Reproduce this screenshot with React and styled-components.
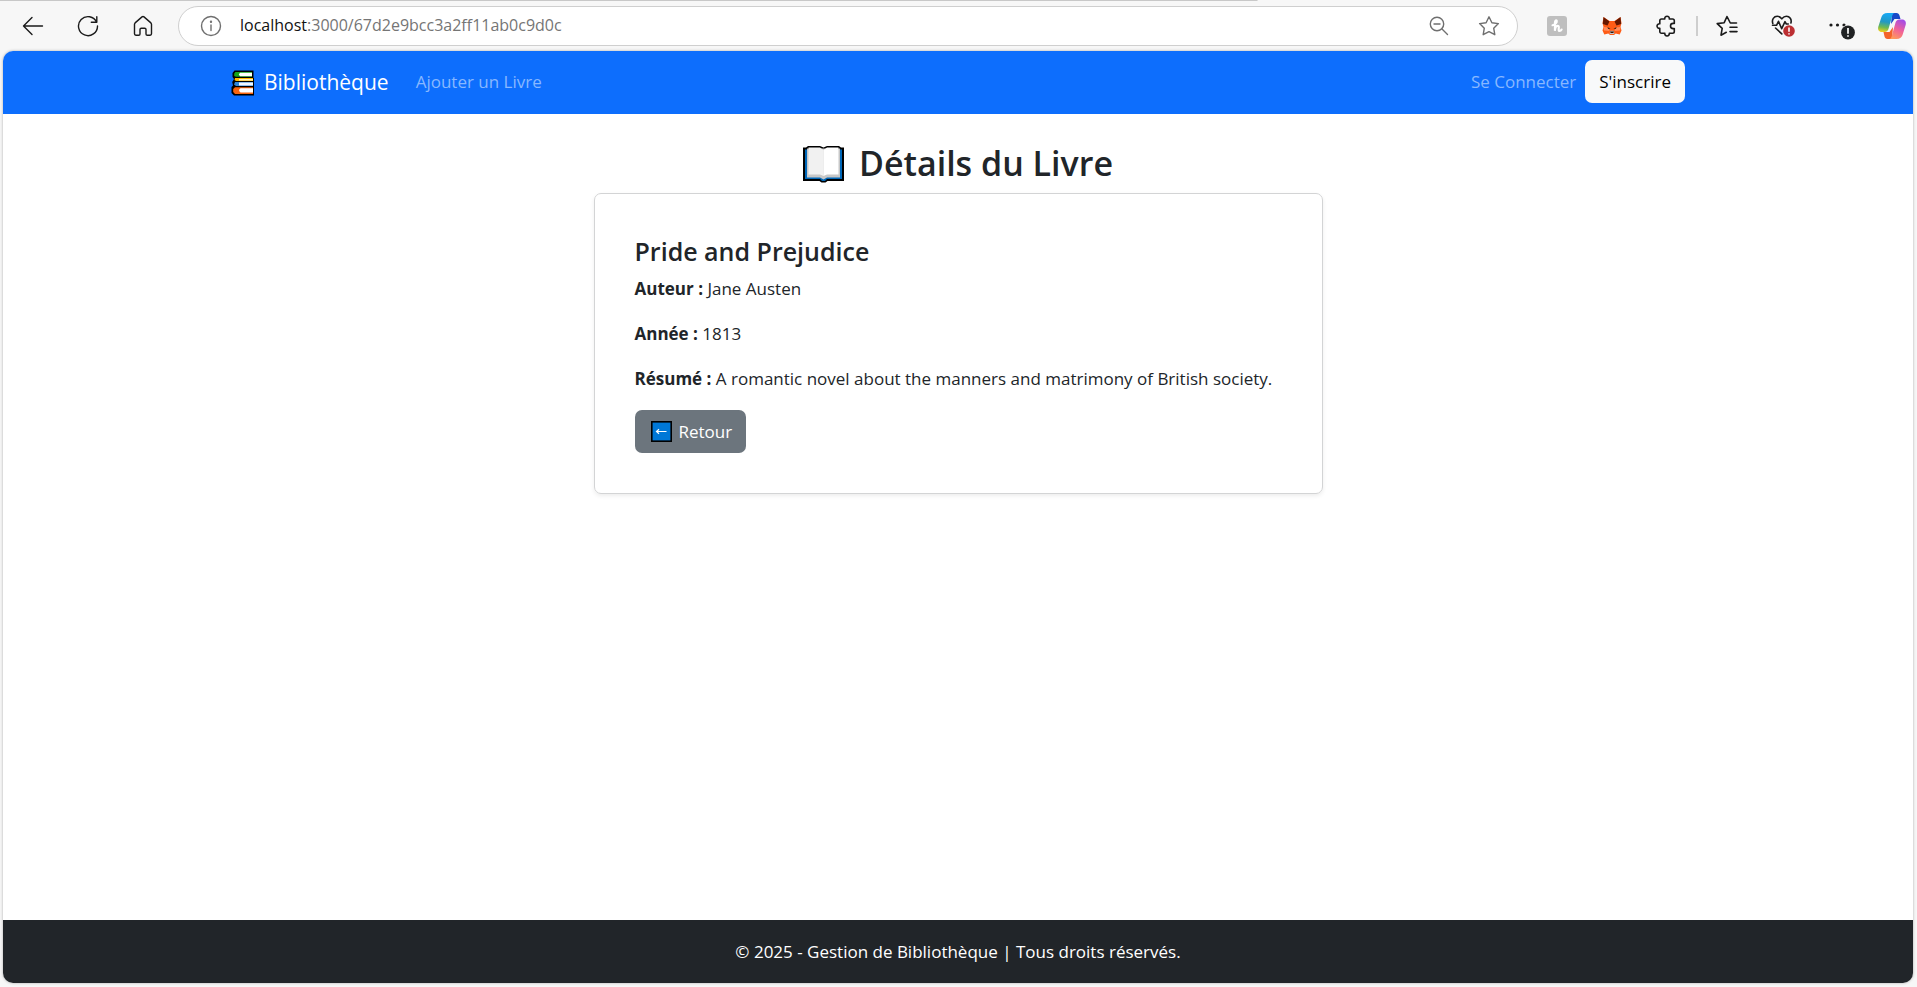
import React from "react";
import styled, { createGlobalStyle } from "styled-components";

const GlobalStyle = createGlobalStyle`
  *, *::before, *::after { box-sizing: border-box; }
  html, body { margin: 0; padding: 0; }
  body {
    background: #f7f7f7;
    color: #212529;
    font-family: "Segoe UI", "Open Sans", "Noto Sans", sans-serif;
    font-size: 17px;
    line-height: 27px;
  }
  button, input { font: inherit; }
`;

const Window = styled.div`
  display: flex;
  flex-direction: column;
  min-height: 100vh;
`;

/* Browser toolbar */

const Toolbar = styled.header`
  display: flex;
  align-items: center;
  height: 51px;
  padding: 0 0 8px 5px;
  background: linear-gradient(#c8c8c8, #c8c8c8) 0 0 / 65.6% 1px no-repeat #f7f7f7;
`;

const ToolButton = styled.button`
  display: flex;
  flex: none;
  align-items: center;
  justify-content: center;
  width: ${(p) => p.$width || 55}px;
  height: 32px;
  margin-top: 8px;
  padding: 0;
  border: 0;
  background: none;
  color: ${(p) => p.$color || "#1b1b1b"};
`;

const AddressBar = styled.label`
  display: flex;
  flex: 1;
  align-items: center;
  height: 40px;
  margin: 8px 11px 0 8px;
  padding: 0 3px 0 7px;
  border: 1px solid #cfcfcf;
  border-radius: 20px;
  background: #fff;
  font-size: 16px;

  ${ToolButton} { margin-top: 0; }
`;

const Host = styled.span`
  margin-left: 4px;
  color: #111;
`;

const UrlInput = styled.input`
  flex: 1;
  min-width: 0;
  padding: 0;
  border: 0;
  outline: 0;
  background: none;
  color: #757575;
`;

const Divider = styled.span`
  width: 2px;
  height: 20px;
  margin: 8px 2px 0;
  background: #cecece;
`;

/* Page */

const Page = styled.div`
  display: flex;
  flex: 1;
  flex-direction: column;
  margin: 0 4px 4px 3px;
  overflow: hidden;
  border-radius: 10px;
  background: #fff;
  box-shadow: 0 0 3px rgba(0, 0, 0, 0.3);
`;

const Navbar = styled.nav`
  padding: 9px 0 11px;
  background: #0d6efd;
`;

const Container = styled.div`
  display: flex;
  align-items: center;
  width: 100%;
  max-width: 1454px;
  margin: 0 auto;
`;

const Brand = styled.a`
  display: flex;
  align-items: center;
  gap: 9px;
  margin-right: 27px;
  padding-top: 2px;
  color: #fff;
  font-size: 21px;
  text-decoration: none;
`;

const NavLink = styled.a`
  color: #88b8ff;
  text-decoration: none;
`;

const NavActions = styled.div`
  display: flex;
  align-items: center;
  gap: 9px;
  margin-left: auto;
`;

const Button = styled.button`
  display: inline-flex;
  align-items: center;
  gap: 6px;
  height: 43px;
  padding: 0 14px;
  border: 0;
  border-radius: 7px;
  background: ${(p) => (p.$light ? "#f8f9fa" : "#6c757d")};
  color: ${(p) => (p.$light ? "#000" : "#fff")};
`;

const Main = styled.main`
  display: flex;
  flex: 1;
  flex-direction: column;
  align-items: center;
  padding: 28px 14px;
`;

const Heading = styled.h2`
  display: flex;
  align-items: center;
  gap: 15px;
  margin: 0 0 8px;
  font-size: 34px;
  font-weight: 600;
  line-height: 43px;
`;

const Card = styled.article`
  width: 100%;
  max-width: 729px;
  padding: 40px;
  border: 1px solid #d3d4d5;
  border-radius: 7px;
  box-shadow: 0 2px 4px rgba(0, 0, 0, 0.075);
`;

const CardTitle = styled.h4`
  margin: 0 0 6px;
  font-size: 25px;
  font-weight: 600;
  line-height: 35px;
`;

const Field = styled.p`
  margin: 0 0 18px;
`;

const Footer = styled.footer`
  padding: 18px;
  background: #212529;
  color: #fff;
  text-align: center;
`;

/* Icons */

const Stroke = ({ size = 22, width = 1.4, children }) => (
  <svg width={size} height={size} viewBox="0 0 22 22" fill="none" stroke="currentColor"
    strokeWidth={width} strokeLinecap="round" strokeLinejoin="round" aria-hidden="true">
    {children}
  </svg>
);

const BackIcon = () => (
  <Stroke><path d="M20.500 11H1.500M10 2.500 1.500 11l8.500 8.500" /></Stroke>
);
const ReloadIcon = () => (
  <Stroke><path d="M19.700 7.300A9.500 9.500 0 1 0 20.500 11M19.800 1.800v5.500h-5.500" /></Stroke>
);
const HomeIcon = () => (
  <Stroke>
    <path d="M2.500 9.300c0-.6.200-1 .6-1.400L10 1.900c.6-.5 1.400-.5 2 0l6.900 6c.4.4.6.8.6 1.400V18.800c0 .9-.5 1.400-1.400 1.400h-2.800c-.8 0-1.300-.5-1.300-1.300v-4.400c0-.8-.5-1.300-1.300-1.300H9.300c-.8 0-1.300.5-1.300 1.300v4.400c0 .8-.5 1.300-1.300 1.300H3.900c-.9 0-1.400-.5-1.400-1.400z" />
  </Stroke>
);
const InfoIcon = () => (
  <Stroke><circle cx="11" cy="11" r="9.500" /><path d="M11 10v5.500" /><circle cx="11" cy="6.800" r=".5" fill="currentColor" /></Stroke>
);
const ZoomOutIcon = () => (
  <Stroke><circle cx="9" cy="9" r="6.700" /><path d="M6 9h6M14 14l5.500 5.500" /></Stroke>
);
const StarIcon = () => (
  <Stroke><path d="m11 1.800 2.900 5.900 6.500.9-4.700 4.600 1.100 6.500-5.800-3.100-5.800 3.100 1.100-6.500-4.700-4.600 6.500-.9z" /></Stroke>
);
const PuzzleIcon = () => (
  <Stroke width={1.600}>
    <path d="M5.500 4h3.300a2.300 2.300 0 1 1 4.500 0h3.300c1 0 1.700.7 1.700 1.700v2.700h-1.200a2.600 2.600 0 1 0 0 5.200h1.200v2.900c0 1-.7 1.700-1.700 1.700h-3.300a2.300 2.300 0 1 1-4.500 0H5.500c-1 0-1.700-.7-1.700-1.700v-3.200a2.300 2.300 0 1 1 0-4.500V5.700C3.800 4.700 4.500 4 5.500 4z" />
  </Stroke>
);
const FavoritesIcon = () => (
  <Stroke width={1.600}>
    <path d="M20.500 8h-6.200L11 1.500 8.200 7.700l-7 .9 5 4.700-1.200 6.900 5.300-2.900M14 12.300h7M14 16.600h7" />
  </Stroke>
);
const HeartIcon = () => (
  <svg width="26" height="24" viewBox="0 0 26 24" fill="none" aria-hidden="true">
    <g stroke="#1b1b1b" strokeWidth="1.600" strokeLinecap="round" strokeLinejoin="round">
      <path d="M2.800 9.500C1.500 5.500 4 2.300 7.200 2.300c2 0 3.300 1 4.600 2.500 1.300-1.500 2.600-2.500 4.600-2.500 3.200 0 5.600 3 4.500 6.700M5.500 14l6.300 5.900" />
      <path d="M2.500 11.300h4l2-4 3.200 7.400 3.300-7 1.300 2.300h2" />
    </g>
    <circle cx="19" cy="17" r="5.800" fill="#bc2f32" />
    <path d="M19 13.500v4.300M19 19.300v1.200" stroke="#fff" strokeWidth="1.600" />
  </svg>
);
const MoreIcon = () => (
  <svg width="32" height="28" viewBox="0 0 32 28" aria-hidden="true">
    <g fill="#1b1b1b">
      <circle cx="8" cy="13" r="1.600" /><circle cx="14.500" cy="13" r="1.600" /><circle cx="21" cy="13" r="1.600" />
    </g>
    <circle cx="25" cy="20.500" r="7.600" fill="#f7f7f7" />
    <circle cx="25" cy="20.500" r="6.900" fill="#202224" />
    <path d="M25 16v5.700M25 23.200v1.500" stroke="#fff" strokeWidth="1.700" />
  </svg>
);
const HoneyIcon = () => (
  <svg width="20" height="20" viewBox="0 0 20 20" aria-hidden="true">
    <rect width="20" height="20" rx="3" fill="#bfbfbf" />
    <path d="M5.500 9.300c2.500-.5 4.500-2.600 4.300-4.200-.2-1.500-1.900-1-1.900 1.500v8.200c.3-3 1.500-5 3-5 2.200 0-.4 5.200 1.500 5.200 1.100 0 1.800-.6 2.200-1.500" fill="none" stroke="#fff" strokeWidth="2.100" strokeLinecap="round" />
  </svg>
);
const FoxIcon = () => (
  <svg width="20" height="20" viewBox="0 0 20 20" aria-hidden="true">
    <path d="M1.500 1 7.500 5h5L18.500 1 19.500 7l-1 4 1 3.500-1.800 4-4-1L12 19H8l-1.700-1.500-4 1-1.800-4 1-3.500-1-4z" fill="#ff5c16" />
    <path d="M1.500 1 7.500 5.500 5.500 9.500.8 8zM18.500 1l-6 4.500 2 4L19.200 8z" fill="#661800" />
    <path d="m1.500 11 5 .5 1 3.500-5.500-.5zM18.500 11l-5 .5-1 3.500 5.500-.5z" fill="#ff8d5d" />
    <path d="m5.500 11 3 2-2.500-.2zM14.500 11l-3 2 2.500-.2z" fill="#1c1410" />
    <path d="m8 15.500.5-.8h3l.5.8.3 2.500H7.700z" fill="#c0c4cd" />
    <path d="M8 15.500h4l-.7 1.500H8.700z" fill="#391400" />
  </svg>
);
const CopilotIcon = () => (
  <svg width="30" height="28" viewBox="0 0 30 28" aria-hidden="true">
    <defs>
      <linearGradient id="cpA" x1=".4" y1="0" x2=".25" y2="1">
        <stop offset="0" stopColor="#18a9f5" /><stop offset=".45" stopColor="#2298c4" />
        <stop offset=".75" stopColor="#6fb951" /><stop offset="1" stopColor="#f5cf1b" />
      </linearGradient>
      <linearGradient id="cpB" x1=".75" y1="0" x2=".3" y2="1">
        <stop offset="0" stopColor="#a24be8" /><stop offset=".5" stopColor="#f0609a" /><stop offset="1" stopColor="#ff9a5a" />
      </linearGradient>
    </defs>
    <path d="M15 1h4.500c1.700 0 2.500 1 3 2.500L23.500 7h-6L14 12z" fill="#1749c8" />
    <path d="M15 27h-4.500c-1.700 0-2.500-1-3-2.500L6.500 20h6l3.500-5z" fill="#f4632a" />
    <path d="M10.500 1H18c-1.600 0-2.300 1.300-2.800 3l-3.600 12.500C11 18.800 9.800 20 7.500 20H4.800C2 20 .5 17.500 1.300 14.700l2.900-9C5 2.800 7 1 10.500 1z" fill="url(#cpA)" />
    <path d="M19.500 27H12c1.600 0 2.300-1.300 2.800-3l3.600-13C19 8.700 20.200 7.500 22.500 7.500h2.700c2.800 0 4.300 2.500 3.500 5.300l-2.900 9.500C25 25.200 23 27 19.500 27z" fill="url(#cpB)" />
  </svg>
);

const BooksIcon = () => (
  <svg width="24" height="26" viewBox="0 0 24 26" aria-hidden="true">
    <path d="M3.500.5H22.500V8H23v17.500H3L.5 23v-6L2 15.500 1.200 12 3 9 1.500 7V3z" fill="#000" />
    <path d="M4.300 2H21v4.800H5L3.200 6V3.800z" fill="#16a51a" />
    <path d="M9 2.800h12v3.400H9L7.800 4.500z" fill="#fff" />
    <path d="M4 8h18v3H5L3.500 10z" fill="#ffb900" />
    <path d="M8 9h14v1.600H8z" fill="#fff3c2" />
    <path d="M4 12h18v4H5l-2-1.500z" fill="#2f86d8" />
    <path d="M8 12.600h14v2.900H8z" fill="#f4f8ff" />
    <path d="M4 17.200h18v6.800H4L2.200 22v-3z" fill="#f7630c" />
    <path d="M9.500 18.200H22v4.300H9.500L8.200 21v-1.500z" fill="#fff" />
  </svg>
);
const OpenBookIcon = () => (
  <svg width="41" height="38" viewBox="0 0 41 38" aria-hidden="true">
    <path d="M0 2.500h3l2-1.500h12l3.500 1.500L24 1h12l2 1.500h3V36H24.500l-2 1.500h-4l-2-1.500H0z" fill="#000" />
    <path d="M2 4.500h37V34H24l-2 2h-3l-2-2H2z" fill="#0067b8" />
    <path d="M4 3.500h33v29H24l-3.500 2-3.500-2H4z" fill="#c7c7c7" />
    <path d="M5.500 2.500H17l3.500 2.500v26L17 29.500H5.500z" fill="#f1f1f1" />
    <path d="M35.500 2.500H24L20.500 5v26l3.500-1.500h11.500z" fill="#fff" />
  </svg>
);
const LeftArrowIcon = () => (
  <svg width="24" height="21" viewBox="0 0 24 21" aria-hidden="true">
    <rect x="2.800" y=".8" width="19.400" height="19.400" fill="#0078d7" stroke="#000" strokeWidth="1.600" />
    <path d="M17.500 10.500H7.500M10 8.300 7.500 10.500l2.500 2.200" fill="none" stroke="#fff" strokeWidth="1.200" />
  </svg>
);

export default function App() {
  return (
    <Window>
      <GlobalStyle />
      <Toolbar>
        <ToolButton aria-label="Précédent"><BackIcon /></ToolButton>
        <ToolButton aria-label="Actualiser"><ReloadIcon /></ToolButton>
        <ToolButton aria-label="Accueil"><HomeIcon /></ToolButton>
        <AddressBar htmlFor="url">
          <ToolButton type="button" $width={50} $color="#6f6f6f" aria-label="Informations"><InfoIcon /></ToolButton>
          <Host>localhost</Host>
          <UrlInput id="url" type="text" defaultValue=":3000/67d2e9bcc3a2ff11ab0c9d0c" />
          <ToolButton type="button" $width={50} $color="#6f6f6f" aria-label="Zoom arrière"><ZoomOutIcon /></ToolButton>
          <ToolButton type="button" $width={50} $color="#6f6f6f" aria-label="Favori"><StarIcon /></ToolButton>
        </AddressBar>
        <ToolButton aria-label="Honey"><HoneyIcon /></ToolButton>
        <ToolButton aria-label="MetaMask"><FoxIcon /></ToolButton>
        <ToolButton aria-label="Extensions"><PuzzleIcon /></ToolButton>
        <Divider />
        <ToolButton $width={54} aria-label="Favoris"><FavoritesIcon /></ToolButton>
        <ToolButton $width={58} aria-label="Performances"><HeartIcon /></ToolButton>
        <ToolButton $width={54} aria-label="Paramètres"><MoreIcon /></ToolButton>
        <ToolButton $width={51} aria-label="Copilot"><CopilotIcon /></ToolButton>
      </Toolbar>

      <Page>
        <Navbar>
          <Container>
            <Brand href="#"><BooksIcon />Bibliothèque</Brand>
            <NavLink href="#ajouter">Ajouter un Livre</NavLink>
            <NavActions>
              <NavLink href="#connexion">Se Connecter</NavLink>
              <Button $light>S'inscrire</Button>
            </NavActions>
          </Container>
        </Navbar>

        <Main>
          <Heading><OpenBookIcon />Détails du Livre</Heading>
          <Card>
            <CardTitle>Pride and Prejudice</CardTitle>
            <Field><strong>Auteur :</strong> Jane Austen</Field>
            <Field><strong>Année :</strong> 1813</Field>
            <Field>
              <strong>Résumé :</strong> A romantic novel about the manners and matrimony of British society.
            </Field>
            <Button><LeftArrowIcon />Retour</Button>
          </Card>
        </Main>

        <Footer>© 2025 - Gestion de Bibliothèque | Tous droits réservés.</Footer>
      </Page>
    </Window>
  );
}
